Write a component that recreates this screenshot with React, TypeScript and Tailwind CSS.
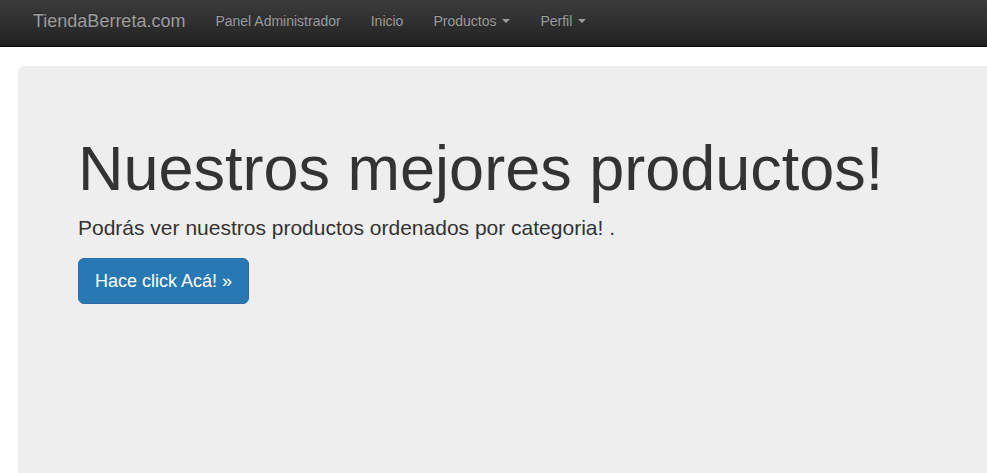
const navLinks = [
  { label: "Panel Administrador", caret: false },
  { label: "Inicio", caret: false },
  { label: "Productos", caret: true },
  { label: "Perfil", caret: true },
];

function Caret() {
  return (
    <span className="ml-[6px] inline-block h-0 w-0 border-x-[4px] border-t-[4px] border-x-transparent border-t-[#9d9d9d] align-middle" />
  );
}

export default function App() {
  return (
    <div className="h-[473px] w-[987px] overflow-hidden bg-white font-['Liberation_Sans',Arial,sans-serif] text-[14px] text-[#333]">
      <nav className="flex h-[47px] items-start border-b border-[#080808] bg-gradient-to-b from-[#3c3c3c] to-[#222] pl-[18px]">
        <a className="px-[15px] pt-[11px] text-[18px] leading-[20px] text-[#9d9d9d] [text-shadow:0_-1px_0_rgba(0,0,0,0.25)]">
          TiendaBerreta.com
        </a>
        <ul className="flex">
          {navLinks.map((link) => (
            <li key={link.label}>
              <a className="flex items-center px-[15px] pt-[11px] leading-[20px] text-[#9d9d9d] [text-shadow:0_-1px_0_rgba(0,0,0,0.25)]">
                {link.label}
                {link.caret && <Caret />}
              </a>
            </li>
          ))}
        </ul>
      </nav>

      <div className="pl-[18px] pt-[19px]">
        <div className="h-[500px] w-[1140px] rounded-[6px] bg-[#eee] px-[60px] pt-[48px]">
          <h1 className="mt-[20px] mb-[10px] text-[63px] leading-[1.1] text-[#333]">
            Nuestros mejores productos!
          </h1>
          <p className="mb-[15px] text-[21px] leading-[30px]">
            Podrás ver nuestros productos ordenados por categoria! .
          </p>
          <p>
            <a className="inline-block rounded-[6px] border border-[#2a6ca3] bg-[#2878b3] px-[16px] py-[10px] text-[18px] leading-[24px] text-white">
              Hace click Acá! »
            </a>
          </p>
        </div>
      </div>
    </div>
  );
}
